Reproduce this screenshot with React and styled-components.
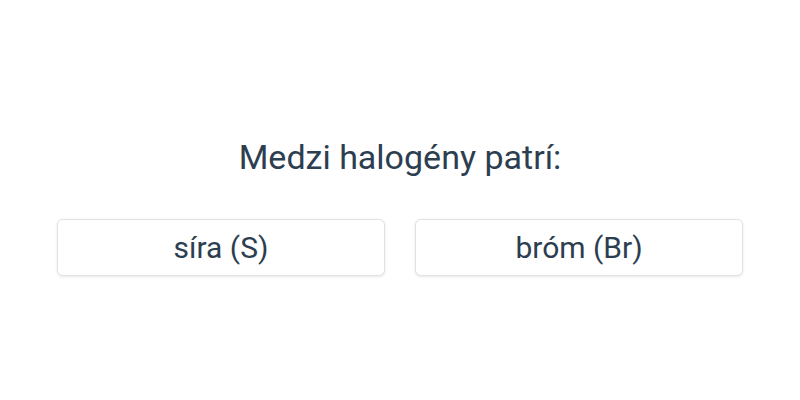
import React from "react";
import styled, { createGlobalStyle } from "styled-components";

const Global = createGlobalStyle`
  html, body { margin: 0; padding: 0; background: #fff; }
  body { font-family: Roboto, "Noto Sans", sans-serif; }
`;

const Page = styled.div`
  width: 800px;
  height: 400px;
  box-sizing: border-box;
  padding-top: 134px;
  display: flex;
  flex-direction: column;
  align-items: center;
`;

const Question = styled.h1`
  margin: 0;
  font-size: 34px;
  font-weight: 400;
  line-height: 46px;
  color: #2c3e50;
`;

const Options = styled.div`
  margin-top: 39px;
  display: grid;
  grid-template-columns: 328px 328px;
  gap: 30px;
`;

const Option = styled.button`
  height: 57px;
  box-sizing: border-box;
  background: #fff;
  border: 1px solid #e0e2e6;
  border-radius: 6px;
  box-shadow: 0 1px 3px rgba(0, 0, 0, 0.1);
  font-family: Roboto, "Noto Sans", sans-serif;
  font-size: 30px;
  color: #2c3e50;
  cursor: pointer;
`;

export default function App() {
  return (
    <>
      <Global />
      <Page>
        <Question>Medzi halogény patrí:</Question>
        <Options>
          <Option>síra (S)</Option>
          <Option>bróm (Br)</Option>
        </Options>
      </Page>
    </>
  );
}
